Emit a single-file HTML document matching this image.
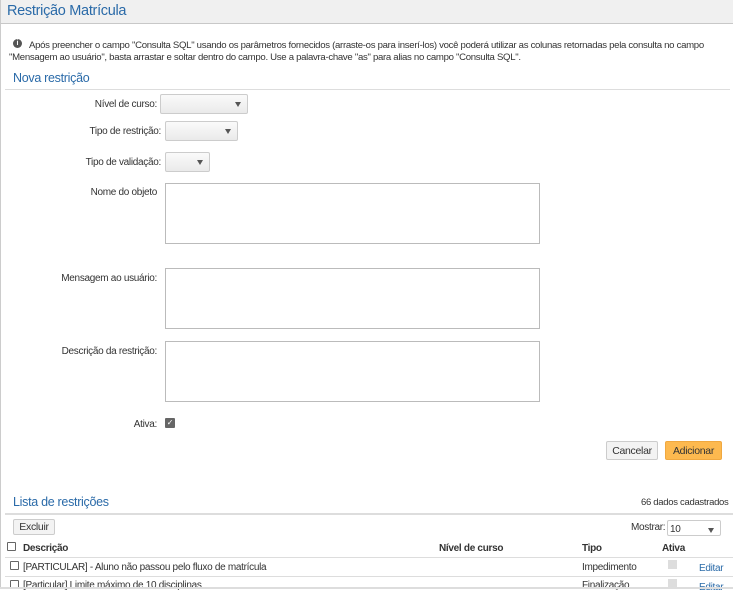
<!DOCTYPE html>
<html><head><meta charset="utf-8"><style>
*{box-sizing:border-box;margin:0;padding:0}
body{width:733px;height:589px;overflow:hidden;background:#fff;font-family:"Liberation Sans",sans-serif;font-size:10px;color:#333;position:relative;letter-spacing:-0.3px}
.a{position:absolute;white-space:nowrap}
.title{left:0;top:0;width:733px;height:24px;background:#f0f0f0;border-bottom:1px solid #c8c8c8;border-left:1px solid #ccc;font-size:14.5px;color:#2a6aa8;padding:3px 0 0 6px}
.lbl{text-align:right;width:157px;left:0}
.sel{border:1px solid #ccc;border-radius:2px;background:linear-gradient(#fafafa,#eaeaea)}
.sel:after{content:"";position:absolute;right:6px;top:7px;border:3px solid transparent;border-top:5px solid #555}
.ta{border:1px solid #bbb;background:#fff}
.btn{border:1px solid #ccc;border-radius:2px;background:#f3f3f3;text-align:center;font-size:10.5px}
.line{height:1px;background:#ddd}
</style></head><body>
<div class="a" style="left:0;top:0;width:1px;height:589px;background:#ccc"></div>
<div class="a title">Restrição Matrícula</div>
<div class="a" style="left:13px;top:39px;width:9px;height:9px;border-radius:50%;background:#555;color:#fff;font-size:7px;font-weight:bold;text-align:center;line-height:9px;letter-spacing:0">i</div>
<div class="a" style="left:29px;top:40px;font-size:9.6px">Após preencher o campo "Consulta SQL" usando os parâmetros fornecidos (arraste-os para inserí-los) você poderá utilizar as colunas retornadas pela consulta no campo</div>
<div class="a" style="left:9px;top:52px;font-size:9.6px">"Mensagem ao usuário", basta arrastar e soltar dentro do campo. Use a palavra-chave "as" para alias no campo "Consulta SQL".</div>
<div class="a" style="left:13px;top:71px;font-size:12.5px;color:#2a6aa8">Nova restrição</div>
<div class="a line" style="left:5px;top:89px;width:725px"></div>
<div class="a lbl" style="top:99px">Nível de curso:</div>
<div class="a sel" style="left:160px;top:94px;width:88px;height:20px"></div>
<div class="a lbl" style="top:126px;width:161px">Tipo de restrição:</div>
<div class="a sel" style="left:165px;top:121px;width:73px;height:20px"></div>
<div class="a lbl" style="top:157px;width:161px">Tipo de validação:</div>
<div class="a sel" style="left:165px;top:152px;width:45px;height:20px"></div>
<div class="a lbl" style="top:187px">Nome do objeto</div>
<div class="a ta" style="left:165px;top:183px;width:375px;height:61px"></div>
<div class="a lbl" style="top:273px">Mensagem ao usuário:</div>
<div class="a ta" style="left:165px;top:268px;width:375px;height:61px"></div>
<div class="a lbl" style="top:346px">Descrição da restrição:</div>
<div class="a ta" style="left:165px;top:341px;width:375px;height:61px"></div>
<div class="a lbl" style="top:419px">Ativa:</div>
<div class="a" style="left:165px;top:418px;width:10px;height:10px;background:#666;border-radius:1px;color:#fff;font-size:8px;line-height:10px;text-align:center">✓</div>
<div class="a btn" style="left:606px;top:441px;width:52px;height:19px;line-height:19px">Cancelar</div>
<div class="a btn" style="left:665px;top:441px;width:57px;height:19px;line-height:19px;background:#fdb94f;border-color:#f0a840">Adicionar</div>
<div class="a" style="left:13px;top:495px;font-size:12.5px;color:#2a6aa8">Lista de restrições</div>
<div class="a" style="left:641px;top:497px;font-size:9.5px">66 dados cadastrados</div>
<div class="a" style="left:5px;top:513px;width:728px;height:2px;background:#ddd"></div>
<div class="a btn" style="left:13px;top:519px;width:42px;height:16px;line-height:15px">Excluir</div>
<div class="a" style="left:631px;top:522px">Mostrar:</div>
<div class="a sel" style="left:667px;top:520px;width:54px;height:16px;background:#fff"><span style="position:absolute;left:2px;top:3px">10</span></div>
<div class="a" style="left:7px;top:542px;width:9px;height:9px;border:1px solid #666;border-radius:1px"></div>
<div class="a" style="left:23px;top:543px;font-weight:bold">Descrição</div>
<div class="a" style="left:439px;top:543px;font-weight:bold">Nível de curso</div>
<div class="a" style="left:582px;top:543px;font-weight:bold">Tipo</div>
<div class="a" style="left:662px;top:543px;font-weight:bold">Ativa</div>
<div class="a line" style="left:5px;top:557px;width:728px"></div>
<div class="a" style="left:10px;top:561px;width:9px;height:9px;border:1px solid #666;border-radius:1px"></div>
<div class="a" style="left:23px;top:562px">[PARTICULAR] - Aluno não passou pelo fluxo de matrícula</div>
<div class="a" style="left:582px;top:562px">Impedimento</div>
<div class="a" style="left:668px;top:560px;width:9px;height:9px;background:#ddd"></div>
<div class="a" style="left:699px;top:563px;color:#2a6aa8">Editar</div>
<div class="a line" style="left:5px;top:576px;width:728px"></div>
<div class="a" style="left:10px;top:580px;width:9px;height:9px;border:1px solid #666;border-radius:1px"></div>
<div class="a" style="left:23px;top:580px">[Particular] Limite máximo de 10 disciplinas</div>
<div class="a" style="left:582px;top:580px">Finalização</div>
<div class="a" style="left:668px;top:579px;width:9px;height:9px;background:#ddd"></div>
<div class="a" style="left:699px;top:582px;color:#2a6aa8">Editar</div>
<div class="a" style="left:0;top:587px;width:733px;height:2px;background:#ddd"></div>
</body></html>
